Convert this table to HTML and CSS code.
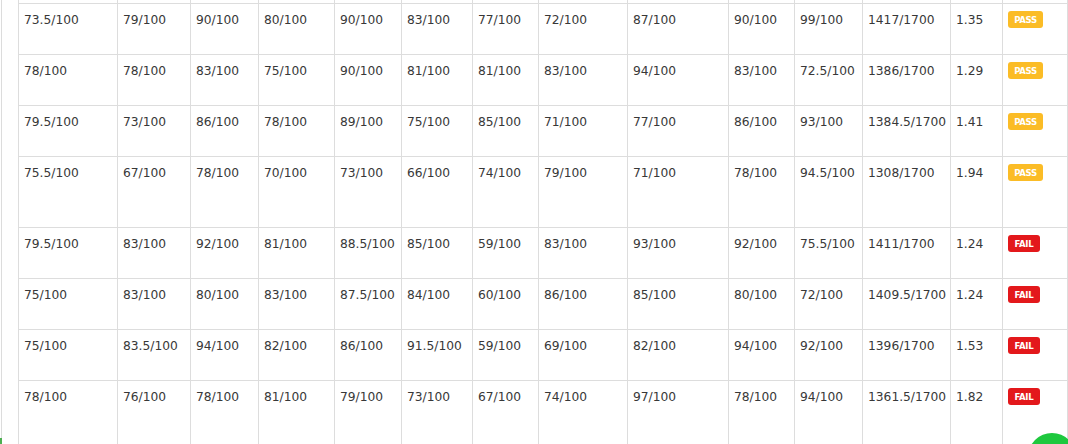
FILE: index.html
```html
<!DOCTYPE html>
<html>
<head>
<meta charset="utf-8">
<link rel="stylesheet" href="styles.css">
</head>
<body>
<div class="page">
  <table class="scores">
    <colgroup>
      <col style="width:99px"><col style="width:73px"><col style="width:68px"><col style="width:76px"><col style="width:67px"><col style="width:71px"><col style="width:66px"><col style="width:89px"><col style="width:101px"><col style="width:66px"><col style="width:68px"><col style="width:88px"><col style="width:52px"><col style="width:65px">
    </colgroup>
    <tbody>
      <tr class="prev"><td></td><td></td><td></td><td></td><td></td><td></td><td></td><td></td><td></td><td></td><td></td><td></td><td></td><td></td></tr>
      <tr><td>73.5/100</td><td>79/100</td><td>90/100</td><td>80/100</td><td>90/100</td><td>83/100</td><td>77/100</td><td>72/100</td><td>87/100</td><td>90/100</td><td>99/100</td><td>1417/1700</td><td>1.35</td><td><span class="badge pass">PASS</span></td></tr>
      <tr><td>78/100</td><td>78/100</td><td>83/100</td><td>75/100</td><td>90/100</td><td>81/100</td><td>81/100</td><td>83/100</td><td>94/100</td><td>83/100</td><td>72.5/100</td><td>1386/1700</td><td>1.29</td><td><span class="badge pass">PASS</span></td></tr>
      <tr><td>79.5/100</td><td>73/100</td><td>86/100</td><td>78/100</td><td>89/100</td><td>75/100</td><td>85/100</td><td>71/100</td><td>77/100</td><td>86/100</td><td>93/100</td><td>1384.5/1700</td><td>1.41</td><td><span class="badge pass">PASS</span></td></tr>
      <tr class="tall"><td>75.5/100</td><td>67/100</td><td>78/100</td><td>70/100</td><td>73/100</td><td>66/100</td><td>74/100</td><td>79/100</td><td>71/100</td><td>78/100</td><td>94.5/100</td><td>1308/1700</td><td>1.94</td><td><span class="badge pass">PASS</span></td></tr>
      <tr><td>79.5/100</td><td>83/100</td><td>92/100</td><td>81/100</td><td>88.5/100</td><td>85/100</td><td>59/100</td><td>83/100</td><td>93/100</td><td>92/100</td><td>75.5/100</td><td>1411/1700</td><td>1.24</td><td><span class="badge fail">FAIL</span></td></tr>
      <tr><td>75/100</td><td>83/100</td><td>80/100</td><td>83/100</td><td>87.5/100</td><td>84/100</td><td>60/100</td><td>86/100</td><td>85/100</td><td>80/100</td><td>72/100</td><td>1409.5/1700</td><td>1.24</td><td><span class="badge fail">FAIL</span></td></tr>
      <tr><td>75/100</td><td>83.5/100</td><td>94/100</td><td>82/100</td><td>86/100</td><td>91.5/100</td><td>59/100</td><td>69/100</td><td>82/100</td><td>94/100</td><td>92/100</td><td>1396/1700</td><td>1.53</td><td><span class="badge fail">FAIL</span></td></tr>
      <tr class="tall"><td>78/100</td><td>76/100</td><td>78/100</td><td>81/100</td><td>79/100</td><td>73/100</td><td>67/100</td><td>74/100</td><td>97/100</td><td>78/100</td><td>94/100</td><td>1361.5/1700</td><td>1.82</td><td><span class="badge fail">FAIL</span></td></tr>
    </tbody>
  </table>
</div>
<div class="edge-mark"></div>
<div class="chat-button"></div>
</body>
</html>
```
FILE: styles.css
```css
html, body {
  margin: 0;
  padding: 0;
  background: #ffffff;
  overflow: hidden;
  height: 444px;
}

.page {
  margin-left: 1px;
  border-left: 1px solid #dcdcdc;
  padding-left: 16px;
  height: 444px;
  overflow: hidden;
}

.scores {
  border-collapse: collapse;
  table-layout: fixed;
  width: 1049px;
  font-family: "DejaVu Sans", Verdana, sans-serif;
  font-size: 12.25px;
  color: #383838;
}

.scores td {
  border: 1px solid #dddddd;
  padding: 9px 0 0 5px;
  vertical-align: top;
  white-space: nowrap;
  height: 41px;
  line-height: 15px;
}

.scores tr.prev td {
  height: 3px;
  padding: 0;
  border-top: none;
}

.scores tr.tall td {
  height: 61px;
}

.badge {
  display: inline-block;
  margin-top: -2px;
  height: 17px;
  line-height: 17px;
  border-radius: 3px;
  color: #ffffff;
  font-family: "DejaVu Sans Condensed", "DejaVu Sans", sans-serif;
  font-weight: bold;
  font-size: 9.5px;
  letter-spacing: -0.3px;
  vertical-align: top;
  text-align: center;
}

.badge.pass {
  background: #fbbc26;
  width: 35px;
}

.badge.fail {
  background: #e3181b;
  width: 32px;
}

.edge-mark {
  position: absolute;
  left: 0;
  top: 438px;
  width: 2px;
  height: 6px;
  background: #4caf50;
}

.chat-button {
  position: absolute;
  left: 1028px;
  top: 433px;
  width: 48px;
  height: 48px;
  border-radius: 50%;
  background: #1ec83e;
}
```
